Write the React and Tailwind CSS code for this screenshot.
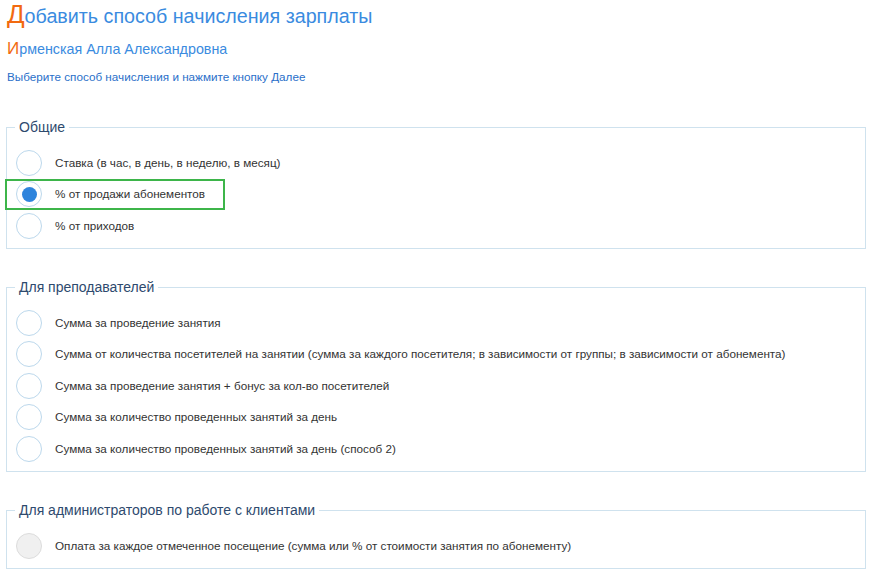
// App.jsx — salary accrual method picker

const GROUPS = [
  {
    title: 'Общие',
    items: [
      { label: 'Ставка (в час, в день, в неделю, в месяц)' },
      { label: '% от продажи абонементов', checked: true, highlight: true },
      { label: '% от приходов' },
    ],
  },
  {
    title: 'Для преподавателей',
    items: [
      { label: 'Сумма за проведение занятия' },
      { label: 'Сумма от количества посетителей на занятии (сумма за каждого посетителя; в зависимости от группы; в зависимости от абонемента)' },
      { label: 'Сумма за проведение занятия + бонус за кол-во посетителей' },
      { label: 'Сумма за количество проведенных занятий за день' },
      { label: 'Сумма за количество проведенных занятий за день (способ 2)' },
    ],
  },
  {
    title: 'Для администраторов по работе с клиентами',
    items: [
      { label: 'Оплата за каждое отмеченное посещение (сумма или % от стоимости занятия по абонементу)', disabled: true },
    ],
  },
];

function Radio({ checked, disabled }) {
  return (
    <span
      className={
        'flex items-center justify-center w-[26px] h-[26px] rounded-full border shrink-0 ' +
        (disabled ? 'bg-[#f0f0f0] border-[#dcdcdc]' : 'bg-white border-[#bcd8ec]')
      }
    >
      {checked && <span className="w-[15px] h-[15px] rounded-full bg-[#2f84dc]" />}
    </span>
  );
}

function Option({ item }) {
  return (
    <div
      className={
        'flex items-center gap-[13px] h-[31px] ' +
        (item.highlight
          ? 'ml-[-14px] pl-[9px] w-[220px] border-2 border-[#3db54a]'
          : 'ml-[-3px]')
      }
    >
      <Radio checked={item.checked} disabled={item.disabled} />
      <span className="text-[11.7px] text-[#333]">{item.label}</span>
    </div>
  );
}

function Group({ group }) {
  return (
    <fieldset className="border border-[#cfe2ee] mx-[6px] pl-[12px] pb-[7px] pt-[12px] min-w-0">
      <legend className="ml-[-4px] px-[4px] text-[14px] text-[#2e4a6e] leading-[16px]">{group.title}</legend>
      <div className="flex flex-col gap-[0.5px]">
        {group.items.map((it, i) => <Option key={i} item={it} />)}
      </div>
    </fieldset>
  );
}

export default function App() {
  return (
    <div className="w-[872px] h-[573px] bg-white overflow-hidden" style={{ fontFamily: '"Liberation Sans", Arial, sans-serif' }}>
      <div className="pl-[7px] pt-[1px]">
        <h1 className="text-[19.7px] leading-[26px] text-[#3a8be0]">
          <span className="text-[#f26a10] text-[26px]">Д</span>обавить способ начисления зарплаты
        </h1>
        <div className="mt-[11px] text-[14.3px] leading-[18px] text-[#3a8be0]">
          <span className="text-[#f26a10] text-[17px]">И</span>рменская Алла Александровна
        </div>
        <div className="mt-[12px] text-[11.7px] leading-[14px] text-[#2a6fc9]">
          Выберите способ начисления и нажмите кнопку Далее
        </div>
      </div>
      <div className="flex flex-col gap-[30px] mt-[35px]">
        {GROUPS.map((g, i) => <Group key={i} group={g} />)}
      </div>
    </div>
  );
}
